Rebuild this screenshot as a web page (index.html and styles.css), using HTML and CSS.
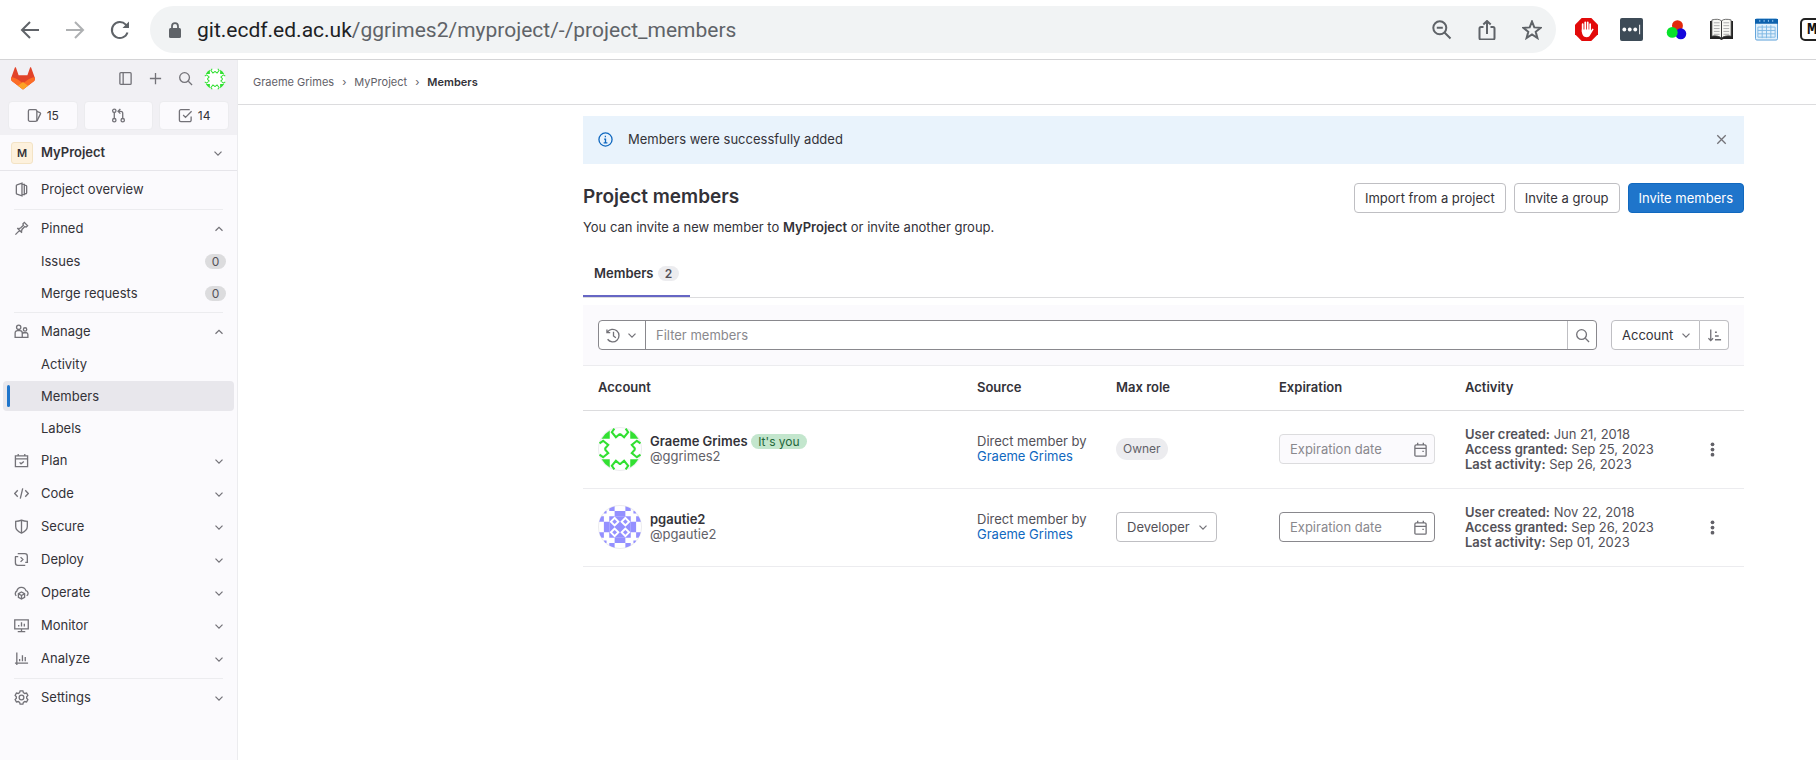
FILE: index.html
```html
<!DOCTYPE html>
<html lang="en">
<head>
  <meta charset="utf-8">
  <title>Members · MyProject</title>
  <link rel="stylesheet" href="styles.css">
</head>
<body>
  <!-- shared icons -->
  <svg class="sprite" aria-hidden="true">
    <symbol id="chevron-down" viewBox="0 0 16 16"><path d="M4 6.5l4 4 4-4"/></symbol>
    <symbol id="chevron-up" viewBox="0 0 16 16"><path d="M4 10l4-4 4 4"/></symbol>
    <symbol id="search" viewBox="0 0 16 16"><circle cx="7" cy="7" r="5.2"/><path d="M11 11l4 4"/></symbol>
    <symbol id="calendar" viewBox="0 0 16 16"><path d="M2 4.5A1.5 1.5 0 0 1 3.500 3h9A1.500 1.500 0 0 1 14 4.500V14a1 1 0 0 1-1 1H3a1 1 0 0 1-1-1zM2 6.800h12M5 .800V3M11 .800V3M10 10h1.500"/></symbol>
    <symbol id="dots" viewBox="0 0 16 16"><g fill="#626168" stroke="none"><circle cx="8" cy="2.500" r="2"/><circle cx="8" cy="8" r="2"/><circle cx="8" cy="13.500" r="2"/></g></symbol>
    <symbol id="identicon-green" viewBox="0 0 43 43">
      <defs>
        <g id="green-side">
          <path d="M3.500 11.500A22 22 0 0 1 11.500 3.500v8z" fill="#32e032" stroke="none"/>
          <path d="M16 1.500l-2.500 3.500 4 5 4-3.500M27 1.500l2.500 3.500-4 5-4-3.500" fill="none" stroke="#32e032" stroke-width="2"/>
        </g>
      </defs>
      <circle cx="21.500" cy="21.500" r="21" fill="#fff" stroke="#ececef" stroke-width="1"/>
      <use href="#green-side"/>
      <use href="#green-side" transform="rotate(90 21.500 21.500)"/>
      <use href="#green-side" transform="rotate(180 21.500 21.500)"/>
      <use href="#green-side" transform="rotate(270 21.500 21.500)"/>
    </symbol>
    <symbol id="identicon-purple" viewBox="0 0 43 43">
      <clipPath id="round"><circle cx="21.500" cy="21.500" r="21"/></clipPath>
      <circle cx="21.500" cy="21.500" r="21" fill="#fff" stroke="#ececef" stroke-width="1"/>
      <g clip-path="url(#round)"><g transform="translate(.5 .5) scale(5.250)" fill="#9490ff" stroke="none">
        <path d="M2 0h1v1H2zM5 0h1v1H5zM3 1h2v1H3zM1 1h.500v.500H1zM6.500 1H7v.500h-.500zM1 6.500h.500V7H1zM6.500 6.500H7V7h-.500z"/>
        <path d="M0 2h1v1H0zM7 2h1v1H7zM1 3h1v2H1zM6 3h1v2H6zM0 5h1v1H0zM7 5h1v1H7zM3 6h2v1H3zM2 7h1v1H2zM5 7h1v1H5z"/>
        <path d="M2 2h4v4H2z"/>
        <path fill="#fff" d="M3 2.050l.950.950-.950.950L2.050 3zM5 2.050l.950.950-.950.950L4.050 3zM3 4.050l.950.950-.950.950L2.050 5zM5 4.050l.950.950-.950.950L4.050 5z"/>
        <path d="M3 2.550l.450.450-.450.450L2.550 3zM5 2.550l.450.450-.450.450L4.550 3zM3 4.550l.450.450-.450.450L2.550 5zM5 4.550l.450.450-.450.450L4.550 5z"/>
      </g></g>
    </symbol>
  </svg>

  <header class="browser">
    <div class="browser-nav">
      <button aria-label="Back"><svg viewBox="0 0 20 20"><path d="M19 10H2M10 2l-8 8 8 8"/></svg></button>
      <button class="faded" aria-label="Forward"><svg viewBox="0 0 20 20"><path d="M1 10h17M10 2l8 8-8 8"/></svg></button>
      <button aria-label="Reload"><svg viewBox="0 0 20 20"><path d="M17.500 12.500A8 8 0 1 1 15.800 4.600L18 7"/><path d="M19 1.500V8h-6.500z" fill="#5f6368" stroke="none"/></svg></button>
    </div>
    <div class="address">
      <svg class="lock" viewBox="0 0 12 16"><path d="M3 7V4.200a3 3 0 0 1 6 0V7" fill="none" stroke="#5f6368" stroke-width="1.800"/><rect x="0" y="6" width="12" height="10" rx="1.500" fill="#5f6368"/></svg>
      <span class="url"><b>git.ecdf.ed.ac.uk</b>/ggrimes2/myproject/-/project_members</span>
      <button aria-label="Zoom"><svg viewBox="0 0 20 20"><circle cx="7.800" cy="7.800" r="6.500"/><path d="M12.500 12.500l6 6M4.800 7.800h6"/></svg></button>
      <button aria-label="Share"><svg viewBox="0 0 20 20"><path d="M6.500 7H4a1.500 1.500 0 0 0-1.500 1.500V18A1.500 1.500 0 0 0 4 19.500h12a1.500 1.500 0 0 0 1.500-1.500V8.500A1.500 1.500 0 0 0 16 7h-2.500M10 14V1M6.300 4.500L10 1l3.700 3.500"/></svg></button>
      <button aria-label="Bookmark"><svg viewBox="0 0 20 20"><path d="M10 1.500l2.300 5.900 6.400.4-5 4 1.700 6.200-5.400-3.500L4.600 18l1.700-6.200-5-4 6.400-.4z"/></svg></button>
    </div>
    <div class="extensions">
      <svg viewBox="0 0 24 24"><path d="M7 0h10l7 7v10l-7 7H7l-7-7V7z" fill="#e20a0a"/><path d="M8 6.500V14M10.700 4.500v9M13.300 4.500v9M15.800 6.500V14" stroke="#fff" stroke-width="1.800" stroke-linecap="round"/><path d="M7.100 12h9.600v1l1.500-2 1.300.8-3.500 5.700c-1 2-2 2.500-3.800 2.500-3.600 0-4.900-3-5.100-6z" fill="#fff"/></svg>
      <svg viewBox="0 0 24 24"><rect width="24" height="24" rx="2" fill="#3d4b57"/><g fill="#fff"><circle cx="4.500" cy="12" r="2"/><circle cx="10.200" cy="12" r="2"/><circle cx="15.900" cy="12" r="2"/><path d="M20 7h1v10h-1z"/></g></svg>
      <svg viewBox="0 0 24 24"><circle cx="13" cy="8" r="5.700" fill="#e2290b"/><circle cx="16.500" cy="16.500" r="5.700" fill="#1507dc"/><circle cx="7.500" cy="15" r="5.700" fill="#08e22b"/></svg>
      <svg viewBox="0 0 24 24"><path d="M0 3h24v19H14l-2 1-2-1H0z" fill="#222"/><path d="M2 2c4-1 8-1 10 1 2-2 6-2 10-1v17c-4-1-8 0-10 2-2-2-6-3-10-2z" fill="#f8f8f4" stroke="#444" stroke-width=".8"/><path d="M12 3v18" stroke="#333"/><path d="M4 5h6M4 8h6M4 11h6M4 14h6M4 17h6M14 5h6M14 8h6M14 11h6M14 14h6M14 17h6" stroke="#aaa"/></svg>
      <svg viewBox="0 0 24 24"><rect x=".5" y="1" width="23" height="22" rx="1.500" fill="#e1f0fc" stroke="#5a9fd8"/><path d="M0 1h24v5H0z" fill="#0c61ad"/><path d="M5 2v2M9.500 2v2M14 2v2M18.500 2v2" stroke="#9ecbf0"/><path d="M3 9.500h18M3 13h18M3 16.500h18M3 20h18M3 9.500V20M7.500 7.500V21M12 7.500V21M16.500 7.500V21M21 9.500V20" stroke="#7fb8e4"/></svg>
      <span class="markdown">M</span>
    </div>
  </header>

  <div class="page">
    <aside class="sidebar">
      <div class="sidebar-top">
        <div class="user-bar">
          <svg class="logo" viewBox="0 0 24 23"><path d="M12 22.500L1.200 14.300C.2 13.500-.2 12 .2 10.800L3.800.8c.2-.6 1-.6 1.200 0l2.600 7.400h8.800L19 .8c.2-.6 1-.6 1.200 0l3.600 10c.4 1.200 0 2.700-1 3.500z" fill="#e24329"/><path d="M12 22.500L.8 14C0 13 0 11.500.3 10.200 3 10.500 5.500 11.500 7.500 13l4.500 3.300 4.500-3.300c2-1.500 4.500-2.500 7.200-2.800.3 1.300.3 2.800-.5 3.800z" fill="#fc6d26"/><path d="M12 22.500l-5-3.800 5-3.700 5 3.700z" fill="#fca326"/></svg>
          <button aria-label="Collapse sidebar"><svg class="icon" viewBox="0 0 16 16"><rect x="2" y="1.800" width="12" height="12.400" rx="1"/><path d="M5.500 2v12"/></svg></button>
          <button aria-label="Create new"><svg class="icon" viewBox="0 0 16 16"><path d="M8 2v12M2 8h12"/></svg></button>
          <button aria-label="Search"><svg class="icon"><use href="#search"/></svg></button>
          <svg class="avatar-small"><use href="#identicon-green"/></svg>
        </div>
        <div class="counters">
          <a href="#"><svg class="icon" viewBox="0 0 16 16"><rect x="1.500" y="1.800" width="9" height="12.400" rx="1.500"/><path d="M10.500 3.500L14 5l.500 1-4 8"/></svg>15</a>
          <a href="#" aria-label="Merge requests"><svg class="icon" viewBox="0 0 16 16"><circle cx="3.500" cy="3" r="1.800"/><circle cx="3.500" cy="13" r="1.800"/><circle cx="12.500" cy="13" r="1.800"/><path d="M3.500 5v6M12.500 11V5.500A2 2 0 0 0 10.500 3.500H8M10 1L7.500 3.500 10 6"/></svg></a>
          <a href="#"><svg class="icon" viewBox="0 0 16 16"><path d="M12.500 1.800H3A1.500 1.500 0 0 0 1.500 3.300V13A1.500 1.500 0 0 0 3 14.500h9.500A1.500 1.500 0 0 0 14 13V9M5.500 7.500L8 10l6.500-6.500"/></svg>14</a>
        </div>
      </div>
      <button class="project"><span class="project-avatar">M</span>MyProject<svg class="icon chevron"><use href="#chevron-down"/></svg></button>

      <nav class="menu">
        <div class="group">
          <a class="item" href="#"><svg class="icon" viewBox="0 0 16 16"><path d="M8.500 1.200v13.600L3.200 13a1 1 0 0 1-.7-1V4a1 1 0 0 1 .7-1zM8.500 2.500H11v11H8.500M11 3.500h1.500a1 1 0 0 1 1 1v7a1 1 0 0 1-1 1H11"/></svg>Project overview</a>
        </div>
        <div class="group">
          <button class="item"><svg class="icon" viewBox="0 0 16 16"><path d="M1.500 14.500L6 10M3.500 7.500l5 5M5 8l2-.500 3-3-.500-1.500L11 1.500 14.500 5 13 6.500l-1.500-.500-3 3L8 11.500"/></svg>Pinned<svg class="icon chevron"><use href="#chevron-up"/></svg></button>
          <a class="subitem" href="#">Issues<span class="count">0</span></a>
          <a class="subitem" href="#">Merge requests<span class="count">0</span></a>
        </div>
        <div class="group">
          <button class="item"><svg class="icon" viewBox="0 0 16 16"><circle cx="5" cy="3.500" r="2.300"/><circle cx="11.800" cy="5.800" r="1.800"/><path d="M1.200 14.200V9.500A2.500 2.500 0 0 1 3.700 7h2.600a2.500 2.500 0 0 1 2.500 2.500v4.700zM8.800 14.200h6V11.500A2 2 0 0 0 13 9.300h-2.500a2 2 0 0 0-1.700 1"/></svg>Manage<svg class="icon chevron"><use href="#chevron-up"/></svg></button>
          <a class="subitem" href="#">Activity</a>
          <a class="subitem active" href="#">Members</a>
          <a class="subitem" href="#">Labels</a>
          <button class="item"><svg class="icon" viewBox="0 0 16 16"><path d="M1.500 3h13v11.500h-13zM1.500 6.300h13M4.500 1v2M11.500 1v2M6 10l1.500 1.500L10.500 9"/></svg>Plan<svg class="icon chevron"><use href="#chevron-down"/></svg></button>
          <button class="item"><svg class="icon" viewBox="0 0 16 16"><path d="M4 4.500L.8 8 4 11.500M12 4.500L15.200 8 12 11.500M9.300 2.500l-2.600 11"/></svg>Code<svg class="icon chevron"><use href="#chevron-down"/></svg></button>
          <button class="item"><svg class="icon" viewBox="0 0 16 16"><path d="M8 1.200c2 .900 4.200 1.300 6.200 1.300V8c0 3-2.200 5.300-6.200 7-4-1.700-6.200-4-6.200-7V2.500C3.800 2.500 6 2.100 8 1.200zM8 1.200V15"/></svg>Secure<svg class="icon chevron"><use href="#chevron-down"/></svg></button>
          <button class="item"><svg class="icon" viewBox="0 0 16 16"><path d="M4 1.800h7.500a2.700 2.700 0 0 1 2.700 2.700V11M1.500 5v6.500a2.700 2.700 0 0 0 2.700 2.700H12M7 5.500L9.500 8 7 10.500M1 5h3.500M12 11h3"/></svg>Deploy<svg class="icon chevron"><use href="#chevron-down"/></svg></button>
          <button class="item"><svg class="icon" viewBox="0 0 16 16"><path d="M2.500 11.500a3 3 0 0 1 .500-5A5 5 0 0 1 12.700 6a3 3 0 0 1 .800 5.500M8 7.500l3.300 1.800v3.800L8 15l-3.300-1.900V9.300zM4.700 9.300L8 11.200l3.300-1.900M8 11.200V15"/></svg>Operate<svg class="icon chevron"><use href="#chevron-down"/></svg></button>
          <button class="item"><svg class="icon" viewBox="0 0 16 16"><path d="M.8 2h14.400v9.500H.8zM8 11.500v3M4 14.500h8M5 9V7.500M8 9V4.500M11 9V6"/></svg>Monitor<svg class="icon chevron"><use href="#chevron-down"/></svg></button>
          <button class="item"><svg class="icon" viewBox="0 0 16 16"><path d="M3 1.500V15M1 13h14M6 11V8.500M9 11V4.500M12 11V6.500"/></svg>Analyze<svg class="icon chevron"><use href="#chevron-down"/></svg></button>
        </div>
        <div class="group">
          <button class="item"><svg class="icon" viewBox="0 0 16 16"><path d="M6.500 1h3l.500 1.800 1.500.900 1.900-.500 1.400 2.600L13.500 7.200v1.600l1.300 1.400-1.400 2.600-1.900-.500-1.500.900L9.500 15h-3L6 13.200l-1.500-.900-1.900.500-1.400-2.600L2.500 8.800V7.200L1.200 5.800l1.400-2.600 1.900.5L6 2.800z"/><circle cx="8" cy="8" r="2.500"/></svg>Settings<svg class="icon chevron"><use href="#chevron-down"/></svg></button>
        </div>
      </nav>
    </aside>

    <div class="content">
      <nav class="breadcrumbs">
        <a href="#">Graeme Grimes</a><span>›</span><a href="#">MyProject</a><span>›</span><strong>Members</strong>
      </nav>

      <main>
        <div class="alert">
          <svg class="icon info" viewBox="0 0 16 16"><circle cx="8" cy="8" r="7"/><path d="M6.500 7.500H8v4M6 11.500h4M7.200 4.800h1.300"/></svg>
          <span>Members were successfully added</span>
          <button aria-label="Dismiss"><svg class="icon" viewBox="0 0 16 16"><path d="M3.500 3.500l9 9M12.500 3.500l-9 9"/></svg></button>
        </div>

        <div class="heading">
          <div>
            <h1>Project members</h1>
            <p>You can invite a new member to <strong>MyProject</strong> or invite another group.</p>
          </div>
          <div class="actions">
            <button class="btn">Import from a project</button>
            <button class="btn">Invite a group</button>
            <button class="btn confirm">Invite members</button>
          </div>
        </div>

        <div class="tabs">
          <a class="tab" href="#">Members <span>2</span></a>
        </div>

        <div class="filter">
          <div class="search-box">
            <button class="history" aria-label="Recent searches"><svg class="icon" viewBox="0 0 16 16"><path d="M1 1.500V5h3.500M1.500 4.500a6.700 6.700 0 1 1 .2 7.500M8 4v4.500l2.500 2"/></svg><svg class="icon chevron"><use href="#chevron-down"/></svg></button>
            <input type="text" placeholder="Filter members" aria-label="Filter members">
            <button class="go" aria-label="Search"><svg class="icon"><use href="#search"/></svg></button>
          </div>
          <div class="sort">
            <div class="dropdown">
              <select aria-label="Sort by"><option>Account</option></select>
              <svg class="icon chevron"><use href="#chevron-down"/></svg>
            </div>
            <button aria-label="Sort direction"><svg class="icon" viewBox="0 0 16 16"><path d="M4 1.500v12M1.500 11L4 13.500 6.500 11M8.500 4.500h2M8.500 8.500h4M8.500 12.500h6.500"/></svg></button>
          </div>
        </div>

        <table>
          <colgroup>
            <col>
            <col class="col-source">
            <col class="col-role">
            <col class="col-expiration">
            <col class="col-activity">
            <col class="col-actions">
          </colgroup>
          <thead>
            <tr><th>Account</th><th>Source</th><th>Max role</th><th>Expiration</th><th>Activity</th><th></th></tr>
          </thead>
          <tbody>
            <tr>
              <td>
                <div class="account">
                  <svg class="avatar"><use href="#identicon-green"/></svg>
                  <div><strong>Graeme Grimes</strong> <span class="badge success">It's you</span><br><span class="handle">@ggrimes2</span></div>
                </div>
              </td>
              <td class="source">Direct member by <a href="#">Graeme Grimes</a></td>
              <td><span class="badge role">Owner</span></td>
              <td>
                <div class="date">
                  <input type="text" placeholder="Expiration date" aria-label="Expiration date" disabled>
                  <svg class="icon"><use href="#calendar"/></svg>
                </div>
              </td>
              <td><b>User created:</b> Jun 21, 2018<br><b>Access granted:</b> Sep 25, 2023<br><b>Last activity:</b> Sep 26, 2023</td>
              <td><button class="more" aria-label="More actions"><svg class="icon"><use href="#dots"/></svg></button></td>
            </tr>
            <tr>
              <td>
                <div class="account">
                  <svg class="avatar"><use href="#identicon-purple"/></svg>
                  <div><strong>pgautie2</strong><br><span class="handle">@pgautie2</span></div>
                </div>
              </td>
              <td class="source">Direct member by <a href="#">Graeme Grimes</a></td>
              <td>
                <div class="dropdown role-select">
                  <select aria-label="Max role"><option>Developer</option></select>
                  <svg class="icon chevron"><use href="#chevron-down"/></svg>
                </div>
              </td>
              <td>
                <div class="date">
                  <input type="text" placeholder="Expiration date" aria-label="Expiration date">
                  <svg class="icon"><use href="#calendar"/></svg>
                </div>
              </td>
              <td><b>User created:</b> Nov 22, 2018<br><b>Access granted:</b> Sep 26, 2023<br><b>Last activity:</b> Sep 01, 2023</td>
              <td><button class="more" aria-label="More actions"><svg class="icon"><use href="#dots"/></svg></button></td>
            </tr>
          </tbody>
        </table>
      </main>
    </div>
  </div>
</body>
</html>
```
FILE: styles.css
```css
* {
  box-sizing: border-box;
}

body {
  margin: 0;
  min-height: 100vh;
  display: flex;
  flex-direction: column;
  overflow-x: hidden;
  background: #fff;
  color: #333238;
  font: 13px/15px Inter, "Liberation Sans", sans-serif;
}

button, input, select {
  font: inherit;
  color: inherit;
}

button {
  display: flex;
  align-items: center;
  justify-content: center;
  padding: 0;
  border: 0;
  background: none;
  cursor: pointer;
}

a {
  color: inherit;
  text-decoration: none;
}

strong, b {
  font-weight: 600;
}

.sprite {
  position: absolute;
  width: 0;
  height: 0;
}

.icon {
  width: 15px;
  height: 15px;
  flex: none;
  fill: none;
  stroke: #737278;
  stroke-width: 1.4;
}

.chevron {
  width: 14px;
  height: 14px;
}

/* browser toolbar */
.browser {
  display: flex;
  align-items: center;
  height: 60px;
  padding-left: 20px;
  border-bottom: 1px solid #d4d4d6;
  overflow: hidden;
}

.browser button svg {
  width: 20px;
  height: 20px;
  fill: none;
  stroke: #5f6368;
  stroke-width: 2;
}

.browser-nav {
  display: flex;
  gap: 25px;
  margin-right: 20px;
}

.browser-nav .faded {
  opacity: 0.5;
}

.address {
  display: flex;
  align-items: center;
  flex: 1;
  gap: 25px;
  height: 47px;
  padding: 0 14px 0 19px;
  border-radius: 24px;
  background: #f1f3f4;
}

.lock {
  width: 12px;
  height: 16px;
  margin-right: -9px;
}

.url {
  flex: 1;
  font-family: Roboto, sans-serif;
  font-size: 21px;
  line-height: 24px;
  color: #5f6368;
}

.url b {
  font-weight: 400;
  color: #202124;
}

.extensions {
  display: flex;
  gap: 22px;
  margin: 0 -8px 0 19px;
}

.extensions svg {
  width: 23px;
  height: 23px;
}

.markdown {
  width: 24px;
  height: 23px;
  border: 2px solid #222;
  border-radius: 5px;
  color: #111;
  font: bold 17px/19px "Liberation Mono", monospace;
  text-align: center;
}

/* layout */
.page {
  display: flex;
  flex: 1;
}

.content {
  flex: 1;
}

/* sidebar */
.sidebar {
  width: 238px;
  background: #fbfafd;
  border-right: 1px solid #ececef;
}

.sidebar-top {
  padding: 7px 8px 5px;
  background: #f1f0f4;
}

.user-bar {
  display: flex;
  align-items: center;
  gap: 15px;
  margin: 0 3px 11px;
}

.logo {
  width: 24px;
  height: 23px;
  margin-right: auto;
}

.avatar-small {
  width: 22px;
  height: 22px;
  margin-left: -4px;
}

.counters {
  display: flex;
  gap: 6px;
}

.counters a {
  display: flex;
  flex: 1;
  align-items: center;
  justify-content: center;
  gap: 5px;
  height: 29px;
  border: 1px solid #ececef;
  border-radius: 4px;
  background: #fbfafd;
  font-size: 12px;
}

.project {
  width: 100%;
  height: 36px;
  gap: 8px;
  padding: 0 12px 0 11px;
  border-bottom: 1px solid #e6e5ea;
  font-weight: 600;
}

.project-avatar {
  width: 22px;
  border: 1px solid #f3e3c5;
  border-radius: 3px;
  background: #fdf1dd;
  font-size: 11px;
  line-height: 20px;
}

.project .chevron, .item .chevron {
  margin-left: auto;
}

.group {
  display: flex;
  flex-direction: column;
  margin: 0 14px;
  padding: 2px 0 3px;
  border-bottom: 1px solid #ececef;
}

.group:last-child {
  border-bottom: 0;
}

.item {
  display: flex;
  align-items: center;
  justify-content: flex-start;
  gap: 12px;
  width: 100%;
  height: 33px;
}

.item .chevron {
  margin-right: -3px;
}

.subitem {
  display: flex;
  align-items: center;
  justify-content: space-between;
  height: 30px;
  margin: 1px -11px;
  padding: 0 8px 0 38px;
  border-radius: 4px;
}

.subitem.active {
  background: #e8e7ec;
  position: relative;
}

.subitem.active::before {
  content: "";
  position: absolute;
  left: 4px;
  top: 4px;
  width: 3px;
  height: 22px;
  border-radius: 2px;
  background: #1f75cb;
}

.count {
  width: 21px;
  border-radius: 8px;
  background: #dcdcde;
  color: #535158;
  font-size: 12px;
  text-align: center;
}

/* main column */
.breadcrumbs {
  display: flex;
  align-items: center;
  gap: 8px;
  height: 45px;
  padding-left: 15px;
  border-bottom: 1px solid #dcdcde;
  color: #626168;
  font-size: 11px;
}

.breadcrumbs strong {
  color: #333238;
}

main {
  padding: 11px 72px 0 345px;
}

.alert {
  display: flex;
  align-items: center;
  gap: 15px;
  height: 48px;
  padding: 0 15px 2px;
  background: #e9f3fc;
}

.alert .info {
  stroke: #1068bf;
}

.alert button {
  margin-left: auto;
}

.heading {
  display: flex;
  justify-content: space-between;
  padding-top: 19px;
}

h1 {
  margin: 2px 0 9px;
  font-size: 19px;
  line-height: 24px;
  font-weight: 600;
}

p {
  margin: 0;
  line-height: 18px;
}

.actions {
  display: flex;
  gap: 8px;
}

.btn {
  height: 30px;
  padding: 0 10px;
  border: 1px solid #bfbfc3;
  border-radius: 4px;
  background: #fff;
}

.btn.confirm {
  border-color: #1068bf;
  background: #1f75cb;
  color: #fff;
}

.tabs {
  display: flex;
  margin-top: 15px;
  border-bottom: 1px solid #dcdcde;
}

.tab {
  padding: 15px 11px 14px;
  border-bottom: 2px solid #6666c4;
  font-weight: 600;
}

.tab span {
  display: inline-block;
  margin-left: 1px;
  padding: 0 7px;
  border-radius: 8px;
  background: #ececef;
  color: #535158;
  font-size: 12px;
}

.filter {
  display: flex;
  gap: 14px;
  margin-top: 7px;
  padding: 15px;
  border-bottom: 1px solid #ececef;
  background: #fbfafd;
}

.search-box {
  display: flex;
  flex: 1;
  height: 30px;
  border: 1px solid #89888d;
  border-radius: 4px;
  background: #fff;
}

.search-box input {
  flex: 1;
  padding: 0 10px;
  border: 0;
  background: none;
}

input::placeholder {
  color: #89888d;
  opacity: 1;
}

.history {
  width: 47px;
  gap: 4px;
  border-right: 1px solid #89888d;
}

.go {
  width: 29px;
  border-left: 1px solid #bfbfc3;
}

.sort {
  display: flex;
  height: 30px;
}

.sort button {
  width: 29px;
  border: 1px solid #bfbfc3;
  border-left: 0;
  border-radius: 0 4px 4px 0;
  background: #fff;
}

.dropdown {
  display: grid;
  align-items: center;
}

.dropdown select, .dropdown svg {
  grid-area: 1 / 1;
}

.dropdown svg {
  justify-self: end;
  margin-right: 7px;
  pointer-events: none;
}

.dropdown select {
  appearance: none;
  width: 100%;
  height: 30px;
  padding: 0 25px 0 10px;
  border: 1px solid #bfbfc3;
  border-radius: 4px;
  background: #fff;
}

.sort select {
  border-radius: 4px 0 0 4px;
}

.role-select {
  width: 101px;
}

/* members table */
table {
  width: 100%;
  border-collapse: collapse;
  table-layout: fixed;
}

.col-source { width: 139px; }
.col-role { width: 163px; }
.col-expiration { width: 186px; }
.col-activity { width: 232px; }
.col-actions { width: 62px; }

th, td {
  height: 78px;
  padding: 0 15px;
  border-bottom: 1px solid #ececef;
  text-align: left;
  vertical-align: middle;
  color: #535158;
}

th {
  height: 44px;
  border-color: #dcdcde;
  color: #333238;
  font-weight: 600;
}

td a {
  color: #1068bf;
}

.source {
  padding-right: 5px;
}

.account {
  display: flex;
  align-items: center;
  gap: 8px;
}

.account strong {
  color: #333238;
}

.avatar {
  width: 44px;
  height: 44px;
}

.handle {
  color: #626168;
}

.badge {
  display: inline-block;
  padding: 0 7px;
  border-radius: 12px;
  font-size: 12px;
}

.badge.success {
  background: #c3e6cd;
  color: #24663b;
}

.badge.role {
  background: #ececef;
  color: #626168;
  line-height: 22px;
}

.date {
  display: grid;
  align-items: center;
}

.date input {
  grid-area: 1 / 1;
  width: 100%;
  height: 30px;
  padding: 0 10px;
  border: 1px solid #89888d;
  border-radius: 4px;
  background: #fff;
}

.date input:disabled {
  border-color: #dcdcde;
  background: #fbfafd;
}

.date svg {
  grid-area: 1 / 1;
  justify-self: end;
  margin-right: 7px;
}

.more {
  margin-left: 8px;
}
```
